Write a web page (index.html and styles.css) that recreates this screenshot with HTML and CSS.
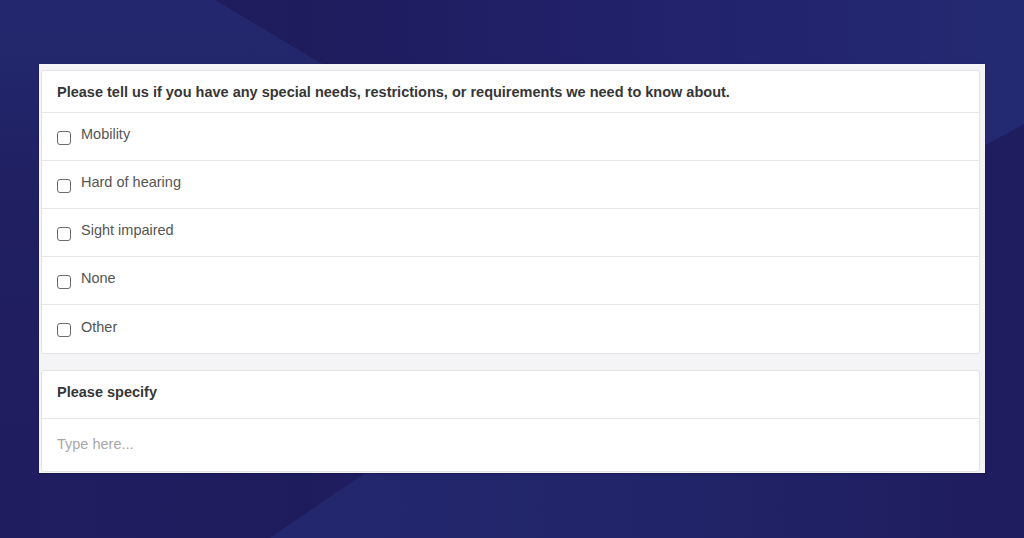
FILE: index.html
```html
<!DOCTYPE html>
<html lang="en">
<head>
<meta charset="utf-8">
<title>Special needs form</title>
<link rel="stylesheet" href="styles.css">
</head>
<body>
<div class="bg">
  <div class="shape shape-top"></div>
  <div class="shape shape-right"></div>
  <div class="shape shape-bottom"></div>
</div>
<main class="stage">
  <section class="panel">
    <div class="card">
      <div class="card-head">Please tell us if you have any special needs, restrictions, or requirements we need to know about.</div>
      <label class="option"><span class="box"></span><span class="label">Mobility</span></label>
      <label class="option"><span class="box"></span><span class="label">Hard of hearing</span></label>
      <label class="option"><span class="box"></span><span class="label">Sight impaired</span></label>
      <label class="option"><span class="box"></span><span class="label">None</span></label>
      <label class="option"><span class="box"></span><span class="label">Other</span></label>
    </div>
    <div class="card card-second">
      <div class="card-head card-head-tall">Please specify</div>
      <div class="input-row"><span class="placeholder">Type here...</span></div>
    </div>
  </section>
</main>
</body>
</html>
```
FILE: styles.css
```css
* { box-sizing: border-box; }
html, body { margin: 0; padding: 0; }
body {
  width: 1024px;
  height: 538px;
  overflow: hidden;
  position: relative;
  font-family: "Liberation Sans", Arial, sans-serif;
  background: linear-gradient(90deg, #201e61 0%, #1f1c5e 30%, #21216a 60%, #242a71 100%);
}
.bg { position: absolute; inset: 0; z-index: 0; }
.shape { position: absolute; }
.shape-top {
  left: 0; top: 0; width: 340px; height: 538px;
  background: linear-gradient(180deg, #23286e 0px, #22266b 64px, #201f62 200px, #1f1d5f 538px);
  clip-path: polygon(0 0, 215px 0, 322px 64px, 39px 64px, 39px 538px, 0 538px);
}
.shape-right {
  left: 940px; top: 100px; width: 84px; height: 438px;
  background: #1f1d60;
  clip-path: polygon(84px 24px, 84px 438px, 0 438px, 0 70px);
}
.shape-bottom {
  left: 250px; top: 473px; width: 736px; height: 65px;
  background: linear-gradient(90deg, #23276d 0%, #22256a 50%, #1f1d60 100%);
  clip-path: polygon(20px 65px, 115px 0, 736px 0, 736px 65px);
}
.stage {
  position: relative;
  z-index: 1;
  padding: 64px 39px 0 39px;
}
.panel {
  width: 946px;
  height: 409px;
  background: #f4f4f6;
  padding: 6px 5px 2px 2px;
  display: flex;
  flex-direction: column;
  gap: 16px;
  box-shadow: 0 1px 2px rgba(0,0,0,0.25);
}
.card {
  background: #ffffff;
  border: 1px solid #e3e3e3;
  border-radius: 3px;
  display: flex;
  flex-direction: column;
}
.card-head {
  height: 42px;
  padding: 0 15px;
  display: flex;
  align-items: center;
  font-size: 14.5px;
  font-weight: bold;
  color: #363636;
  border-bottom: 1px solid #e6e6e6;
}
.card-head-tall { height: 48px; padding-bottom: 6px; }
.option {
  height: 48px;
  padding: 0 15px;
  display: flex;
  align-items: center;
  gap: 10px;
  border-bottom: 1px solid #e6e6e6;
  font-size: 14.5px;
  color: #555555;
}
.option:last-child { border-bottom: none; }
.box {
  width: 14px;
  height: 14px;
  border: 1px solid #6b6b6b;
  border-radius: 3px;
  background: #fff;
  margin-top: 2px;
  flex: none;
}
.label { margin-top: -5px; }
.input-row {
  height: 52px;
  padding: 0 15px 2px;
  display: flex;
  align-items: center;
  font-size: 14.5px;
}
.placeholder { color: #a8a8a8; }
```
